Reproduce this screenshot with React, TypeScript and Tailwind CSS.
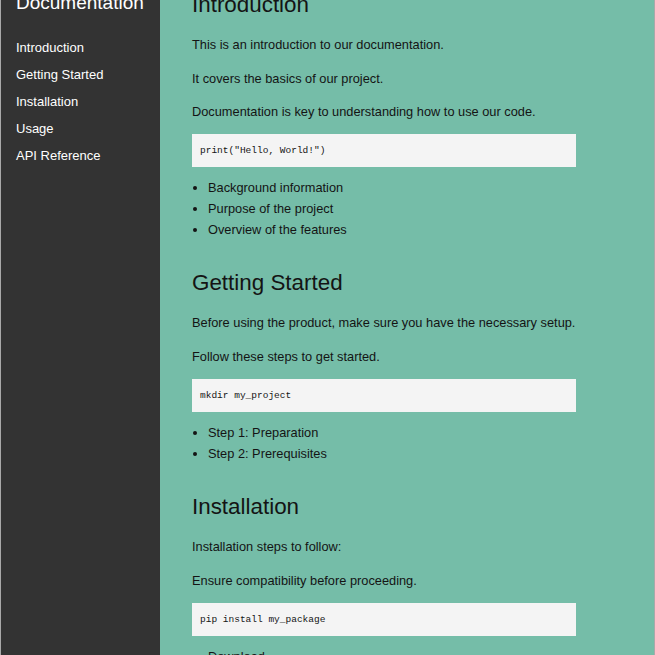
import React from 'react';

type Section = {
  id: string;
  title: string;
  paragraphs: string[];
  code: string;
  items: string[];
};

const sections: Section[] = [
  {
    id: 'introduction',
    title: 'Introduction',
    paragraphs: [
      'This is an introduction to our documentation.',
      'It covers the basics of our project.',
      'Documentation is key to understanding how to use our code.',
    ],
    code: 'print("Hello, World!")',
    items: ['Background information', 'Purpose of the project', 'Overview of the features'],
  },
  {
    id: 'getting-started',
    title: 'Getting Started',
    paragraphs: [
      'Before using the product, make sure you have the necessary setup.',
      'Follow these steps to get started.',
    ],
    code: 'mkdir my_project',
    items: ['Step 1: Preparation', 'Step 2: Prerequisites'],
  },
  {
    id: 'installation',
    title: 'Installation',
    paragraphs: ['Installation steps to follow:', 'Ensure compatibility before proceeding.'],
    code: 'pip install my_package',
    items: ['Download', 'Install'],
  },
  {
    id: 'usage',
    title: 'Usage',
    paragraphs: ['Learn how to use the package in your project.'],
    code: 'import my_package',
    items: ['Basic usage', 'Advanced usage'],
  },
  {
    id: 'api-reference',
    title: 'API Reference',
    paragraphs: ['Detailed reference for every public function.'],
    code: 'my_package.run()',
    items: ['Functions', 'Classes'],
  },
];

function DocSection({ section }: { section: Section }) {
  return (
    <section id={section.id} className="mb-[28.7px]">
      <h2 className="text-[22.4px] leading-[27px] font-normal mb-[16.6px]">{section.title}</h2>
      {section.paragraphs.map((p) => (
        <p key={p} className="text-[12.8px] leading-[21px] mb-[12.33px]">
          {p}
        </p>
      ))}
      <pre className="bg-[#f4f4f4] px-[8px] py-[8px] text-[9.5px] leading-[16px] font-['DejaVu_Sans_Mono',monospace] mb-[10px]">
        <code>{section.code}</code>
      </pre>
      <ul className="list-disc pl-[16px] text-[12.8px] leading-[21px]">
        {section.items.map((item) => (
          <li key={item}>{item}</li>
        ))}
      </ul>
    </section>
  );
}

export default function App() {
  return (
    <div className="h-screen overflow-hidden border-x border-[#a9a9a9] font-['Liberation_Sans',Arial,sans-serif]">
      <div className="flex min-h-[700px] -mt-[9.4px]">
        <nav className="w-[159px] shrink-0 bg-[#333333] text-white pl-[15px]">
          <h1 className="text-[19px] leading-[23px] font-normal">Documentation</h1>
          <ul className="mt-[20.7px]">
            {sections.map((s) => (
              <li key={s.id} className="text-[13px] leading-[27px]">
                <a href={`#${s.id}`}>{s.title}</a>
              </li>
            ))}
          </ul>
        </nav>
        <main className="flex-1 bg-[#75bda8] text-[#141414] pl-[32px]">
          <div className="w-[384px]">
            {sections.map((s) => (
              <DocSection key={s.id} section={s} />
            ))}
          </div>
        </main>
      </div>
    </div>
  );
}
